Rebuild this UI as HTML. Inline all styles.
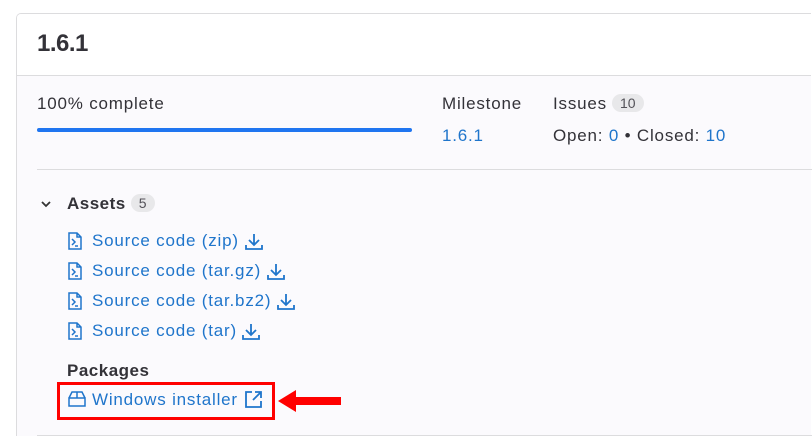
<!DOCTYPE html>
<html><head><style>
html,body{margin:0;width:812px;height:437px;overflow:hidden}
body{background:#fff;font-family:"Liberation Sans",sans-serif;color:#333238;position:relative}
.card{position:absolute;left:16px;top:13px;width:794px;height:422px;border:1px solid #dcdcde;border-right:none;border-bottom:none;border-radius:5px 0 0 0;background:#fbfafd;overflow:hidden}
.hdr{height:61px;background:#fff;border-bottom:1px solid #dcdcde}
.t{position:absolute;white-space:nowrap;font-size:17px;letter-spacing:0.8px}
a,.l{color:#1f75cb}
.badge{display:inline-block;background:#e8e8ea;color:#535158;border-radius:10px;font-size:14px;padding:1px 8px;margin-left:5px;vertical-align:1px;letter-spacing:0}
svg{position:absolute}
</style></head><body>
<div class="card"><div class="hdr"></div></div>
<div class="t" style="left:37px;top:30px;font-size:24px;font-weight:bold;letter-spacing:-0.5px">1.6.1</div>
<div class="t" style="left:37px;top:94px">100% complete</div>
<div style="position:absolute;left:37px;top:128px;width:375px;height:4px;border-radius:2px;background:#1f75f0"></div>
<div class="t" style="left:442px;top:94px">Milestone</div>
<div class="t l" style="left:442px;top:126px">1.6.1</div>
<div class="t" style="left:553px;top:94px">Issues<span class="badge">10</span></div>
<div class="t" style="left:553px;top:126px">Open: <span class="l">0</span> • Closed: <span class="l">10</span></div>
<div style="position:absolute;left:37px;top:169px;width:775px;height:1px;background:#dcdcde"></div>
<svg style="left:40px;top:199px" width="12" height="10" viewBox="0 0 12 10"><path d="M2 3l4 4 4-4" fill="none" stroke="#333" stroke-width="1.8"/></svg>
<div class="t" style="left:67px;top:194px;font-weight:bold;letter-spacing:0.5px">Assets<span class="badge" style="font-weight:normal">5</span></div>
<div class="t l" style="left:92px;top:231px">Source code (zip)</div>
<div class="t l" style="left:92px;top:261px">Source code (tar.gz)</div>
<div class="t l" style="left:92px;top:291px">Source code (tar.bz2)</div>
<div class="t l" style="left:92px;top:321px">Source code (tar)</div>
<svg style="left:68px;top:232px" width="14" height="18" viewBox="0 0 14 18"><path d="M1 1h8l4 4v12H1z M9 1v4h4 M4 7l3 3-3 3 M7 14h3" fill="none" stroke="#1f75cb" stroke-width="1.5"/></svg>
<svg style="left:68px;top:262px" width="14" height="18" viewBox="0 0 14 18"><path d="M1 1h8l4 4v12H1z M9 1v4h4 M4 7l3 3-3 3 M7 14h3" fill="none" stroke="#1f75cb" stroke-width="1.5"/></svg>
<svg style="left:68px;top:292px" width="14" height="18" viewBox="0 0 14 18"><path d="M1 1h8l4 4v12H1z M9 1v4h4 M4 7l3 3-3 3 M7 14h3" fill="none" stroke="#1f75cb" stroke-width="1.5"/></svg>
<svg style="left:68px;top:322px" width="14" height="18" viewBox="0 0 14 18"><path d="M1 1h8l4 4v12H1z M9 1v4h4 M4 7l3 3-3 3 M7 14h3" fill="none" stroke="#1f75cb" stroke-width="1.5"/></svg>
<svg style="left:245px;top:233px" width="18" height="17" viewBox="0 0 18 17"><path d="M9 1v10 M4 7l5 5 5-5 M1 12v4h16v-4" fill="none" stroke="#1f75cb" stroke-width="1.8"/></svg>
<svg style="left:267px;top:263px" width="18" height="17" viewBox="0 0 18 17"><path d="M9 1v10 M4 7l5 5 5-5 M1 12v4h16v-4" fill="none" stroke="#1f75cb" stroke-width="1.8"/></svg>
<svg style="left:277px;top:293px" width="18" height="17" viewBox="0 0 18 17"><path d="M9 1v10 M4 7l5 5 5-5 M1 12v4h16v-4" fill="none" stroke="#1f75cb" stroke-width="1.8"/></svg>
<svg style="left:242px;top:323px" width="18" height="17" viewBox="0 0 18 17"><path d="M9 1v10 M4 7l5 5 5-5 M1 12v4h16v-4" fill="none" stroke="#1f75cb" stroke-width="1.8"/></svg>
<div class="t" style="left:67px;top:361px;font-weight:bold;letter-spacing:0.5px">Packages</div>
<div style="position:absolute;left:57px;top:382px;width:212px;height:32px;border:3px solid #f00"></div>
<svg style="left:68px;top:391px" width="18" height="16" viewBox="0 0 18 16"><path d="M1 7h16v8H1z M1 7l3-6h10l3 6 M9 1v6" fill="none" stroke="#1f75cb" stroke-width="1.5"/></svg>
<div class="t l" style="left:92px;top:390px">Windows installer</div>
<svg style="left:244px;top:390px" width="19" height="19" viewBox="0 0 19 19"><path d="M8 2H2v15h15v-6 M11 2h6v6 M17 2L9 10" fill="none" stroke="#1f75cb" stroke-width="1.8"/></svg>
<svg style="left:278px;top:389px" width="63" height="24" viewBox="0 0 63 24"><path d="M0 12L18 1v7h45v8H18v7z" fill="#f00"/></svg>
<div style="position:absolute;left:37px;top:435px;width:775px;height:1px;background:#dcdcde"></div>
</body></html>
